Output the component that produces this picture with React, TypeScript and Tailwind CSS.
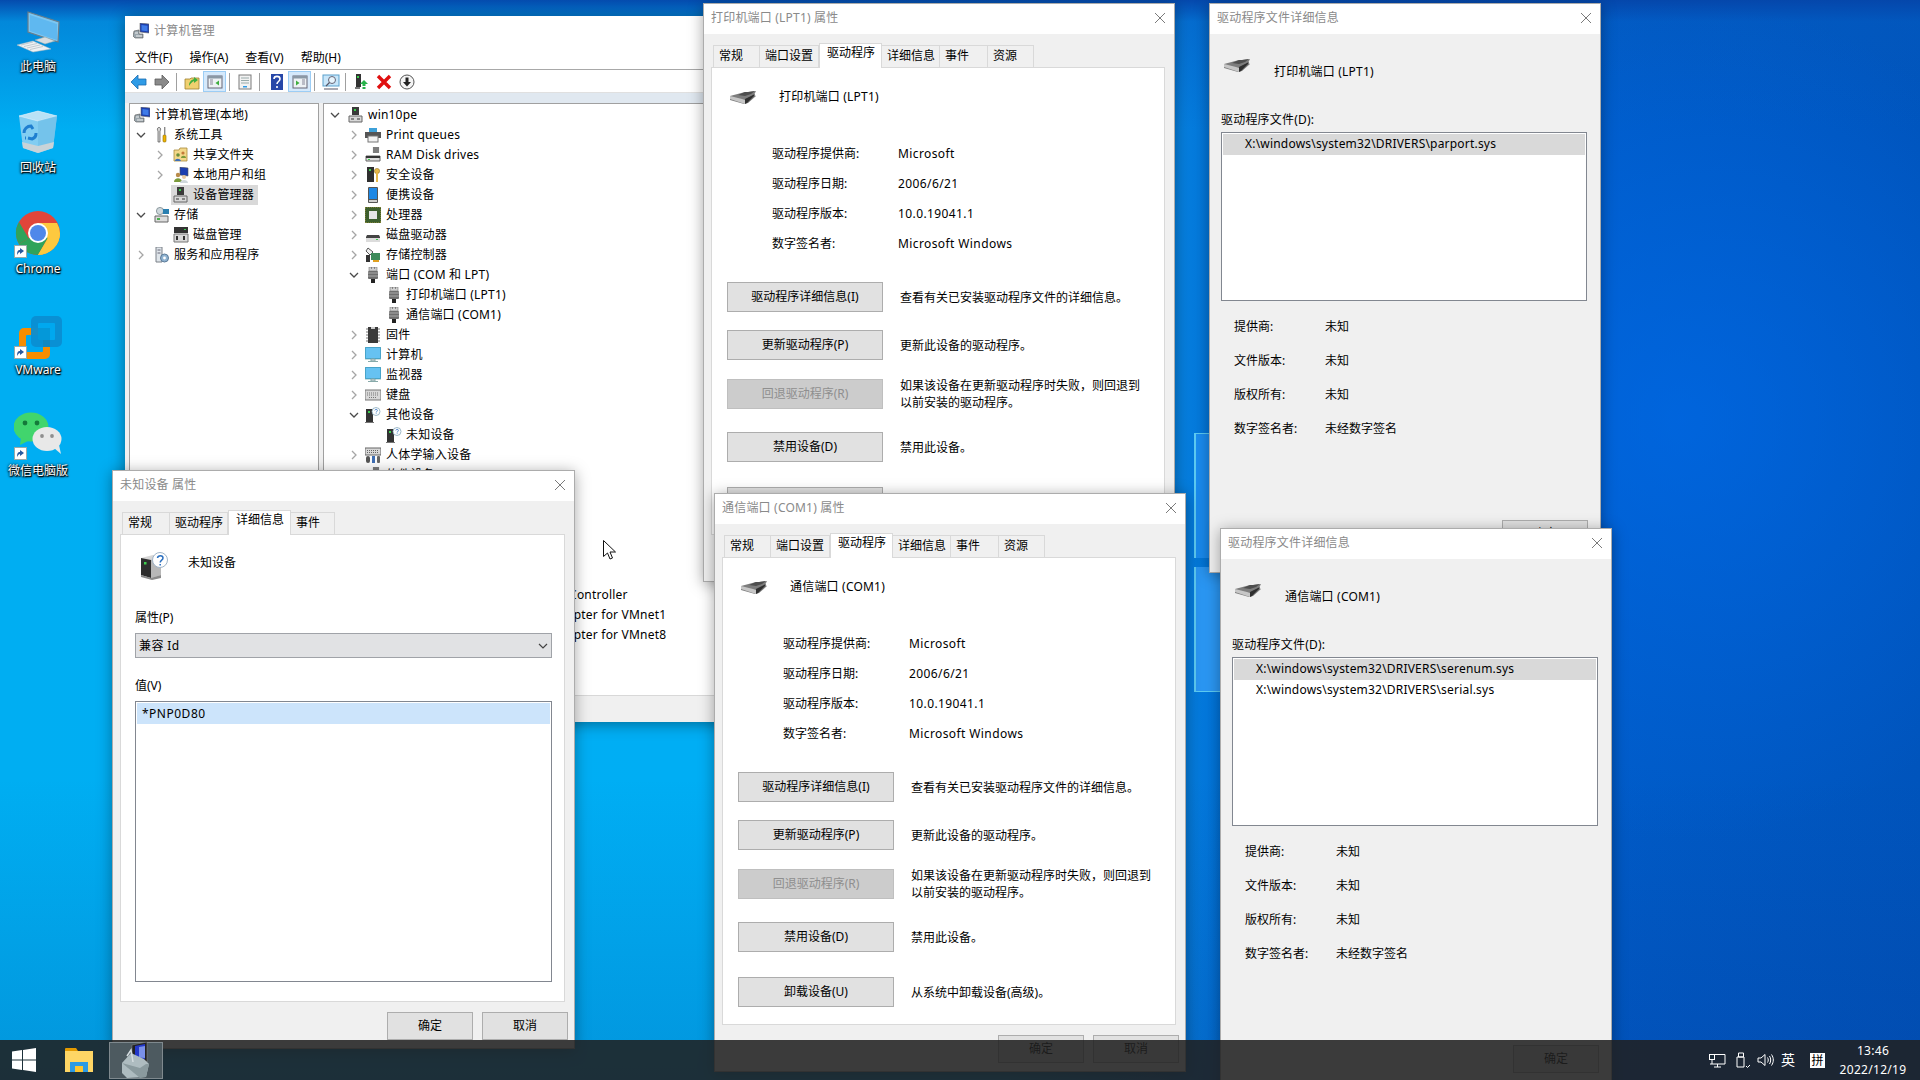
import React from "react";

const FONT = "font-['Noto_Sans','Noto_Sans_CJK_SC',sans-serif]";

function Sv({ s = 16, w, h, vb, children, className = "" }: any) {
  return (
    <svg width={w ?? s} height={h ?? s} viewBox={vb ?? "0 0 16 16"} className={"shrink-0 block " + className}>
      {children}
    </svg>
  );
}

/* ---------- tree icons ---------- */
const Box = () => (
  <>
    <rect x="4" y="0" width="7" height="8" fill="#3a3a3a" />
    <rect x="6" y="2" width="2" height="2" fill="#35d04a" />
    <path d="M1 9h13v6H1z" fill="#d8d8d8" stroke="#666" strokeWidth="1" />
    <path d="M3 12h3M9 12h3" stroke="#333" />
  </>
);
const ComputerMgmt = () => (
  <>
    <path d="M7 0l9 1v9l-9-1z" fill="#1c3fb0" stroke="#666" strokeWidth=".6" />
    <path d="M8.5 2l6 .7v5.6l-6-.7z" fill="#3f7be8" />
    <path d="M1 8l5-1v4h4v4H2L0 13z" fill="#9aa6ad" stroke="#555" strokeWidth=".6" />
    <path d="M2 10h3M3 13h6" stroke="#eee" />
  </>
);
const Tools = () => (
  <>
    <path d="M5 0c-2 1-2 3-1 4v11h2V4c1-1 1-3-1-4z" fill="#d6d6d6" stroke="#555" strokeWidth=".7" />
    <rect x="9" y="8" width="3" height="7" rx="1" fill="#f0b400" stroke="#8a6a00" strokeWidth=".6" />
    <rect x="10" y="0" width="1.4" height="8" fill="#8a8a8a" />
  </>
);
const Share = () => (
  <>
    <path d="M1 3h5l1-2h7v13H1z" fill="#f3d88a" stroke="#a88a3a" strokeWidth=".8" />
    <circle cx="5" cy="8" r="1.8" fill="#6b8e3a" />
    <path d="M2 14c0-3 5-3 6 0z" fill="#3f6fb5" />
    <circle cx="10" cy="6" r="1.6" fill="#c47a3a" />
    <path d="M8 11c0-3 5-3 5 0z" fill="#7a9a3a" />
  </>
);
const Users = () => (
  <>
    <path d="M7 0l8 1v8l-8-1z" fill="#1c3fb0" stroke="#555" strokeWidth=".6" />
    <circle cx="5" cy="8" r="2.2" fill="#b98b4a" />
    <path d="M1 15c0-5 8-5 8 0z" fill="#7a9a3a" />
    <circle cx="11" cy="10" r="2" fill="#e8c9a0" />
    <path d="M7 16c0-4 8-4 8 0z" fill="#cfd8dc" />
  </>
);
const Storage = () => (
  <>
    <circle cx="6" cy="4" r="3.6" fill="#cfd8dc" stroke="#6a7a80" strokeWidth=".7" />
    <rect x="9" y="2" width="6" height="5" fill="#2a7fb0" />
    <path d="M1 9h13v6H1z" fill="#dcdcdc" stroke="#666" />
    <rect x="3" y="11" width="3" height="2" fill="#4caf50" />
  </>
);
const Disk = () => (
  <>
    <rect x="1" y="0" width="14" height="6" fill="#333" />
    <rect x="11" y="2" width="2" height="1" fill="#3ccf4e" />
    <path d="M1 7h14v8H1z" fill="#dadada" stroke="#777" />
    <path d="M4 9v4M11 9v4" stroke="#333" strokeWidth="2" />
  </>
);
const Services = () => (
  <>
    <path d="M2 0h6v15H2z" fill="#dfe5ea" stroke="#7a8088" />
    <path d="M3.5 3h3M3.5 6h3" stroke="#667" />
    <circle cx="10.5" cy="11" r="4" fill="#8fb2d0" stroke="#5a7a98" />
    <circle cx="10.5" cy="11" r="1.4" fill="#fff" />
  </>
);
const Queue = () => (
  <>
    <rect x="4" y="1" width="8" height="4" fill="#3da0d8" />
    <rect x="0" y="5" width="16" height="6" fill="#555" />
    <rect x="3" y="9" width="10" height="6" fill="#f2f2f2" stroke="#777" />
  </>
);
const Ram = () => (
  <>
    <rect x="8" y="0" width="6" height="6" fill="#555" />
    <path d="M7 1h8M7 3h8M7 5h8" stroke="#ddd" strokeWidth=".6" />
    <path d="M1 9h14v5H1z" fill="#dcdcdc" stroke="#666" />
    <rect x="1" y="9" width="14" height="2" fill="#333" />
    <rect x="3" y="12" width="2" height="1" fill="#3ccf4e" />
  </>
);
const Security = () => (
  <>
    <rect x="2" y="0" width="7" height="15" fill="#2f2f2f" />
    <rect x="4" y="2" width="2" height="2" fill="#3ccf4e" />
    <circle cx="12" cy="4" r="2.6" fill="#e6b94a" stroke="#99782a" strokeWidth=".6" />
    <rect x="11" y="6" width="2" height="9" fill="#e6b94a" />
  </>
);
const Portable = () => (
  <>
    <rect x="3" y="0" width="10" height="16" rx="1" fill="#555" />
    <rect x="4" y="1" width="8" height="11" fill="#1e88e5" />
    <rect x="4" y="13" width="8" height="2" fill="#cfcfcf" />
  </>
);
const Cpu = () => (
  <>
    <rect x="0" y="0" width="16" height="16" fill="#3d5f2e" />
    <path d="M0 0h16v16H0z" fill="none" stroke="#b59a3a" strokeDasharray="1 1" />
    <rect x="4" y="4" width="8" height="8" fill="#e6e6e6" />
  </>
);
const DiskDrive = () => (
  <>
    <path d="M2 8h12l1 2v5H1v-5z" fill="#444" />
    <path d="M1 11h14v4H1z" fill="#dcdcdc" />
    <rect x="11" y="12" width="2" height="1" fill="#3ccf4e" />
  </>
);
const StorageCtl = () => (
  <>
    <path d="M3 1l5 4-3 3-4-4z" fill="#eee" stroke="#555" />
    <rect x="1" y="8" width="4" height="7" fill="#333" />
    <rect x="6" y="6" width="9" height="7" fill="#3d8a5a" />
    <rect x="8" y="13" width="6" height="2" fill="#e0a020" />
  </>
);
const Port = () => (
  <>
    <rect x="4" y="0" width="8" height="4" fill="#cfcfcf" stroke="#777" strokeWidth=".6" />
    <path d="M6 1h1M9 1h1" stroke="#444" />
    <rect x="3" y="4" width="10" height="8" rx="1" fill="#6e6e6e" />
    <path d="M3 6h10M3 9h10" stroke="#aaa" />
    <rect x="6" y="12" width="4" height="4" fill="#222" />
  </>
);
const Firmware = () => (
  <>
    <rect x="3" y="0" width="10" height="16" fill="#3a3a3a" />
    <path d="M1 2h2M1 5h2M1 8h2M1 11h2M1 14h2M13 2h2M13 5h2M13 8h2M13 11h2M13 14h2" stroke="#777" />
    <path d="M6 0h4v2H6z" fill="#ccc" />
  </>
);
const Computer = () => (
  <>
    <rect x="0" y="0" width="16" height="12" fill="#2aa0e0" stroke="#7aa" strokeWidth=".8" />
    <rect x="1" y="1" width="14" height="10" fill="#66c2f2" />
    <path d="M6 12h4v2H6zM3 14.5h10" stroke="#8aa" fill="#cfd8dc" />
  </>
);
const Keyboard = () => (
  <>
    <rect x="0" y="3" width="16" height="10" fill="#d8d8d8" stroke="#777" />
    <path d="M2 6h12M2 8h12M4 10.5h8" stroke="#777" strokeDasharray="1 1" />
  </>
);
const Unknown = () => (
  <>
    <rect x="1" y="2" width="7" height="13" fill="#333" />
    <rect x="3" y="4" width="2" height="2" fill="#3ccf4e" />
    <path d="M0 15h9v1H0z" fill="#777" />
    <circle cx="11" cy="4.5" r="4" fill="#fff" stroke="#8ab" strokeWidth=".8" />
    <path d="M9.8 3.4c.3-1.4 2.6-1.4 2.6 0 0 1-1.2 1-1.2 2.1M11.2 6.4v.6" stroke="#2a6fc0" fill="none" strokeWidth=".8" />
  </>
);
const Hid = () => (
  <>
    <rect x="0" y="1" width="16" height="7" fill="#d8d8d8" stroke="#666" />
    <path d="M2 3.5h12M2 5.5h12" stroke="#666" strokeDasharray="1 1" />
    <rect x="1" y="9" width="4" height="7" rx="2" fill="#555" />
    <rect x="7" y="9" width="3" height="7" fill="#3f6fb5" />
    <rect x="12" y="9" width="3" height="7" rx="1" fill="#666" />
  </>
);
const Sound = () => (
  <>
    <path d="M2 6h3l5-4v12l-5-4H2z" fill="#c9c9c9" stroke="#666" />
    <path d="M12 5c1.4 2 1.4 4 0 6" stroke="#666" fill="none" />
  </>
);
const Net = () => (
  <>
    <rect x="1" y="1" width="14" height="9" fill="#5bb5ee" stroke="#667" />
    <path d="M8 10v3M2 14h12" stroke="#444" strokeWidth="1.4" />
  </>
);

const ICONS: any = {
  cm: ComputerMgmt, tools: Tools, share: Share, users: Users, box: Box, storage: Storage, disk: Disk, services: Services,
  queue: Queue, ram: Ram, sec: Security, portable: Portable, cpu: Cpu, drive: DiskDrive, ctl: StorageCtl, port: Port,
  fw: Firmware, pc: Computer, kb: Keyboard, unk: Unknown, hid: Hid, sound: Sound, net: Net,
};

function TreeIcon({ n }: { n: string }) {
  const C = ICONS[n];
  return (
    <Sv>
      <C />
    </Sv>
  );
}

function Chevron({ open }: { open?: boolean }) {
  return open ? (
    <Sv s={16}>
      <path d="M4 6l4 4 4-4" fill="none" stroke="#4a4a4a" strokeWidth="1.3" />
    </Sv>
  ) : (
    <Sv s={16}>
      <path d="M6 4l4 4-4 4" fill="none" stroke="#a6a6a6" strokeWidth="1.3" />
    </Sv>
  );
}

type Node = { lv: number; ic: string; t: string; c?: "o" | "c"; sel?: boolean; tight?: boolean };

const LV = ["pl-[3px]", "pl-[22px]", "pl-[41px]"];

function Row({ lv, ic, t, c, sel, tight }: Node) {
  return (
    <div className={"flex items-center h-[20px] whitespace-nowrap " + LV[lv]}>
      <div className="w-[16px] h-[16px]">{c && <Chevron open={c === "o"} />}</div>
      <div className={"flex items-center h-[20px] pl-[2px] pr-[4px] " + (tight ? "ml-[1px] " : "ml-[3px] ") + (sel ? "bg-[#d9d9d9]" : "")}>
        <TreeIcon n={ic} />
        <span className={"tracking-[0.2px] " + (tight ? "ml-[5px]" : "ml-[4px]")}>{t}</span>
      </div>
    </div>
  );
}

const LEFT: Node[] = [
  { lv: 0, ic: "tools", t: "系统工具", c: "o" },
  { lv: 1, ic: "share", t: "共享文件夹", c: "c" },
  { lv: 1, ic: "users", t: "本地用户和组", c: "c" },
  { lv: 1, ic: "box", t: "设备管理器", sel: true },
  { lv: 0, ic: "storage", t: "存储", c: "o" },
  { lv: 1, ic: "disk", t: "磁盘管理" },
  { lv: 0, ic: "services", t: "服务和应用程序", c: "c" },
];

const RIGHT: Node[] = [
  { lv: 0, ic: "box", t: "win10pe", c: "o" },
  { lv: 1, ic: "queue", t: "Print queues", c: "c", tight: true },
  { lv: 1, ic: "ram", t: "RAM Disk drives", c: "c", tight: true },
  { lv: 1, ic: "sec", t: "安全设备", c: "c", tight: true },
  { lv: 1, ic: "portable", t: "便携设备", c: "c", tight: true },
  { lv: 1, ic: "cpu", t: "处理器", c: "c", tight: true },
  { lv: 1, ic: "drive", t: "磁盘驱动器", c: "c", tight: true },
  { lv: 1, ic: "ctl", t: "存储控制器", c: "c", tight: true },
  { lv: 1, ic: "port", t: "端口 (COM 和 LPT)", c: "o", tight: true },
  { lv: 2, ic: "port", t: "打印机端口 (LPT1)" },
  { lv: 2, ic: "port", t: "通信端口 (COM1)" },
  { lv: 1, ic: "fw", t: "固件", c: "c", tight: true },
  { lv: 1, ic: "pc", t: "计算机", c: "c", tight: true },
  { lv: 1, ic: "pc", t: "监视器", c: "c", tight: true },
  { lv: 1, ic: "kb", t: "键盘", c: "c", tight: true },
  { lv: 1, ic: "unk", t: "其他设备", c: "o", tight: true },
  { lv: 2, ic: "unk", t: "未知设备" },
  { lv: 1, ic: "hid", t: "人体学输入设备", c: "c", tight: true },
  { lv: 1, ic: "ram", t: "软件设备", c: "c", tight: true },
  { lv: 1, ic: "ram", t: "软件组件", c: "c", tight: true },
  { lv: 1, ic: "sound", t: "声音、视频和游戏控制器", c: "c", tight: true },
  { lv: 1, ic: "hid", t: "鼠标和其他指针设备", c: "c", tight: true },
  { lv: 1, ic: "port", t: "通用串行总线控制器", c: "c", tight: true },
  { lv: 1, ic: "net", t: "网络适配器", c: "o", tight: true },
  { lv: 2, ic: "net", t: "Realtek Gaming GbE Family Controller" },
  { lv: 2, ic: "net", t: "VMware Virtual Ethernet Adapter for VMnet1" },
  { lv: 2, ic: "net", t: "VMware Virtual Ethernet Adapter for VMnet8" },
];

/* ---------- toolbar ---------- */
function ToolBtn({ on, children }: any) {
  return (
    <div className={"flex items-center justify-center h-[21px] w-[23px] shrink-0 " + (on ? "bg-[#d5e9fb] border border-[#9ccdf5]" : "")}>
      {children}
    </div>
  );
}
const Sep = () => <div className="w-[1px] h-[18px] bg-[#a0a0a0] mx-[3px] shrink-0" />;

function Toolbar() {
  return (
    <div className="flex items-center h-[22px] bg-white pl-[2px] pt-[1px]">
      <ToolBtn>
        <Sv w={17} h={16} vb="0 0 17 16">
          <path d="M8 1L1 8l7 7v-4h8V5H8z" fill="#2f9be6" stroke="#1a6cb0" strokeWidth=".8" />
        </Sv>
      </ToolBtn>
      <ToolBtn>
        <Sv w={16} h={16}>
          <path d="M8 1l7 7-7 7v-4H1V5h7z" fill="#8a8a8a" stroke="#5c5c5c" strokeWidth=".8" />
        </Sv>
      </ToolBtn>
      <Sep />
      <ToolBtn>
        <Sv>
          <path d="M1 5h5l1-1h8v11H1z" fill="#f0d070" stroke="#a08030" strokeWidth=".8" />
          <path d="M5 12c0-4 2-6 5-7V3l4 3-4 3V7c-2 1-3 2-5 5z" fill="#3fae3f" />
        </Sv>
      </ToolBtn>
      <ToolBtn on>
        <Sv>
          <rect x="1" y="2" width="14" height="12" fill="#eef2f5" stroke="#667" />
          <rect x="1" y="2" width="14" height="2.5" fill="#8a98a5" />
          <path d="M3 6h3M3 8h3M3 10h3" stroke="#889" />
          <path d="M12 6.5v5L8.5 9z" fill="#3fae3f" />
        </Sv>
      </ToolBtn>
      <Sep />
      <ToolBtn>
        <Sv>
          <rect x="2" y="1" width="12" height="14" fill="#f2f2f2" stroke="#7a7a7a" />
          <path d="M4 4h8M4 6.5h8M4 9h8" stroke="#9aa" />
          <rect x="6" y="12" width="4" height="1.5" fill="#2f9be6" />
        </Sv>
      </ToolBtn>
      <Sep />
      <div className="w-[2px] shrink-0" />
      <ToolBtn>
        <Sv w={14} h={16} vb="0 0 14 16">
          <rect x="1" y="0" width="12" height="16" fill="#2747a8" />
          <path d="M4 5c0-3.5 6-3.5 6 0 0 2.5-3 2.5-3 5M7 12v2" stroke="#fff" fill="none" strokeWidth="1.6" />
        </Sv>
      </ToolBtn>
      <ToolBtn on>
        <Sv>
          <rect x="1" y="2" width="14" height="12" fill="#eef2f5" stroke="#667" />
          <rect x="1" y="2" width="14" height="2.5" fill="#8a98a5" />
          <path d="M10 6h3M10 8h3M10 10h3" stroke="#889" />
          <path d="M4 6.5v5L7.5 9z" fill="#3fae3f" />
        </Sv>
      </ToolBtn>
      <Sep />
      <div className="w-[1px] shrink-0" />
      <ToolBtn>
        <Sv w={18} h={16} vb="0 0 18 16">
          <rect x="1" y="1" width="16" height="11" fill="#c8e6fa" stroke="#5aa0cc" />
          <circle cx="10" cy="6" r="3.5" fill="#e8f5fd" stroke="#667" />
          <path d="M7.5 8.5L4 12M2 15h14" stroke="#556" strokeWidth="1.2" />
        </Sv>
      </ToolBtn>
      <Sep />
      <ToolBtn>
        <Sv>
          <rect x="3" y="0" width="5" height="13" fill="#333" />
          <rect x="4" y="2" width="2" height="2" fill="#3ccf4e" />
          <path d="M2 13h5v2H2z" fill="#777" />
          <path d="M11 6l4 4h-2.5v2h-3v-2H7z" fill="#27b34a" />
          <rect x="9.500" y="13" width="3" height="2" fill="#27b34a" />
        </Sv>
      </ToolBtn>
      <ToolBtn>
        <Sv>
          <path d="M2 2l12 12M14 2L2 14" stroke="#e01010" strokeWidth="3.400" />
        </Sv>
      </ToolBtn>
      <ToolBtn>
        <Sv>
          <circle cx="8" cy="8" r="7" fill="#f4f4f4" stroke="#555" />
          <path d="M6.500 3.500h3V8h2.500L8 12.500 4 8h2.500z" fill="#222" />
        </Sv>
      </ToolBtn>
    </div>
  );
}

/* ---------- small dialog parts ---------- */
function CloseX() {
  return (
    <Sv s={12} vb="0 0 12 12">
      <path d="M1 1l10 10M11 1L1 11" stroke="#7a7a7a" strokeWidth="1" />
    </Sv>
  );
}

function TitleBar({ t }: { t: string }) {
  return (
    <div className="flex items-center justify-between h-[30px] bg-white pl-[7px] pr-[8px] pb-[2px] text-[#8a8a8a] tracking-[0.2px] shrink-0">
      <span>{t}</span>
      <CloseX />
    </div>
  );
}

function Tabs({ items, activeIndex }: { items: [string, string][]; activeIndex: number }) {
  return (
    <div className="flex items-end h-[24px] mt-[9px] ml-[9px] shrink-0 relative z-10">
      {items.map(([t, w], i) =>
        i === activeIndex ? (
          <div key={t} className={"h-[25px] -mb-[1px] bg-white border border-b-0 border-[#d9d9d9] pl-[7px] pb-[2px] " + w}>
            {t}
          </div>
        ) : (
          <div key={t} className={"h-[22px] bg-[#f0f0f0] border border-l-0 first:border-l border-b-0 border-[#d9d9d9] pl-[5px] pt-[1px] " + w}>
            {t}
          </div>
        )
      )}
    </div>
  );
}

function Btn({ t, className = "", disabled }: { t: string; className?: string; disabled?: boolean }) {
  return (
    <div
      className={
        "flex items-center justify-center border shrink-0 " +
        (disabled ? "bg-[#cccccc] border-[#bfbfbf] text-[#8f8f8f] " : "bg-[#e1e1e1] border-[#adadad] text-black ") +
        className
      }
    >
      {t}
    </div>
  );
}

function PortIcon() {
  return (
    <Sv w={28} h={16} vb="0 0 28 16">
      <path d="M1 7l15-4h3l8-1-2 4 2 1-8 7-4 1L1 11z" fill="#7d7d7d" />
      <path d="M1 7l12 3 3 1v4L1 10z" fill="#c6c6c6" />
      <path d="M16 10l10-5-1 2-7 7-2 1z" fill="#2f2f2f" />
      <path d="M16 3h3l7-1-4 3-6 2-7-1z" fill="#4e4e4e" />
    </Sv>
  );
}

const DriverRows: [string, string][] = [
  ["驱动程序提供商:", "Microsoft"],
  ["驱动程序日期:", "2006/6/21"],
  ["驱动程序版本:", "10.0.19041.1"],
  ["数字签名者:", "Microsoft Windows"],
];

const PORT_TABS: [string, string][] = [
  ["常规", "w-[47px]"],
  ["端口设置", "w-[59px]"],
  ["驱动程序", "w-[63px]"],
  ["详细信息", "w-[58px]"],
  ["事件", "w-[48px]"],
  ["资源", "w-[46px]"],
];

function ActRow({ btn, disabled, desc, className }: { btn: string; disabled?: boolean; desc: React.ReactNode; className: string }) {
  return (
    <div className={"flex items-center pl-[15px] " + className}>
      <Btn t={btn} disabled={disabled} className="w-[156px] h-[30px]" />
      <div className="ml-[17px] leading-[17px]">{desc}</div>
    </div>
  );
}

function PortDialog({ name, className }: { name: string; className: string }) {
  return (
    <div className={"absolute flex flex-col bg-[#f0f0f0] border border-[#7f7f7f]/60 shadow-[0_2px_14px_rgba(0,0,0,0.35)] w-[472px] h-[579px] " + className}>
      <TitleBar t={name + " 属性"} />
      <Tabs items={PORT_TABS} activeIndex={2} />
      <div className="flex flex-col w-[454px] h-[468px] ml-[7px] bg-white border border-[#d9d9d9]">
        <div className="flex items-start pl-[17px] pt-[21px] h-[71px]">
          <PortIcon />
          <span className="ml-[22px] -mt-[1px] tracking-[0.2px]">{name}</span>
        </div>
        <div className="flex flex-col">
          {DriverRows.map(([a, b]) => (
            <div key={a} className="flex items-center h-[30px] pl-[60px]">
              <span className="w-[126px]">{a}</span>
              <span className="tracking-[0.4px]">{b}</span>
            </div>
          ))}
        </div>
        <ActRow className="mt-[23px]" btn="驱动程序详细信息(I)" desc="查看有关已安装驱动程序文件的详细信息。" />
        <ActRow className="mt-[18px]" btn="更新驱动程序(P)" desc="更新此设备的驱动程序。" />
        <ActRow
          className="mt-[17px]"
          btn="回退驱动程序(R)"
          disabled
          desc={
            <>
              如果该设备在更新驱动程序时失败，则回退到
              <br />
              以前安装的驱动程序。
            </>
          }
        />
        <ActRow className="mt-[21px]" btn="禁用设备(D)" desc="禁用此设备。" />
        <ActRow className="mt-[25px]" btn="卸载设备(U)" desc="从系统中卸载设备(高级)。" />
      </div>
      <div className="flex justify-end gap-[9px] mt-[10px] pr-[6px]">
        <Btn t="确定" className="w-[86px] h-[28px]" />
        <Btn t="取消" className="w-[86px] h-[28px]" />
      </div>
    </div>
  );
}

const FileInfo: [string, string][] = [
  ["提供商:", "未知"],
  ["文件版本:", "未知"],
  ["版权所有:", "未知"],
  ["数字签名者:", "未经数字签名"],
];

function FileDialog({ name, files, className }: { name: string; files: string[]; className: string }) {
  return (
    <div className={"absolute flex flex-col bg-[#f0f0f0] border border-[#7f7f7f]/60 shadow-[0_2px_14px_rgba(0,0,0,0.35)] w-[392px] h-[570px] " + className}>
      <TitleBar t="驱动程序文件详细信息" />
      <div className="flex items-start h-[47px] pl-[13px] pt-[23px]">
        <PortIcon />
        <span className="ml-[23px] mt-[6px] tracking-[0.2px]">{name}</span>
      </div>
      <div className="pl-[11px] mt-[28px] h-[21px] leading-[21px] tracking-[0.2px]">驱动程序文件(D):</div>
      <div className="ml-[11px] mt-[2px] w-[366px] h-[169px] bg-white border border-[#828790] p-[1px]">
        {files.map((f, i) => (
          <div key={f} className={"h-[21px] leading-[20px] pl-[22px] tracking-[0.2px] " + (i === 0 ? "bg-[#d9d9d9]" : "")}>
            {f}
          </div>
        ))}
      </div>
      <div className="flex flex-col mt-[9px]">
        {FileInfo.map(([a, b]) => (
          <div key={a} className="flex items-center h-[34px] pl-[24px]">
            <span className="w-[91px]">{a}</span>
            <span>{b}</span>
          </div>
        ))}
      </div>
      <div className="flex justify-end pr-[12px] mt-[74px]">
        <Btn t="确定" className="w-[86px] h-[28px]" />
      </div>
    </div>
  );
}

function UnknownDevIcon() {
  return (
    <Sv s={28} vb="0 0 28 28">
      <path d="M1 6l12-3 8 2v18l-9 4-11-3z" fill="#d6d6d6" />
      <path d="M1 6l10 2v18L1 23z" fill="#2e2e2e" />
      <path d="M11 8l10-3v18l-10 3z" fill="#b8b8b8" />
      <rect x="4" y="10" width="2.500" height="2.500" fill="#3ccf4e" />
      <path d="M1 23l10 3 10-3v3l-9 2-11-3z" fill="#8a8a8a" />
      <circle cx="20" cy="8" r="7.500" fill="#fff" stroke="#9fb4c8" />
      <path d="M17.500 6c.5-3 5.500-3 5.500 0 0 2.200-2.800 2-2.800 4.500M20.200 12v1.500" stroke="#2a6fc0" fill="none" strokeWidth="1.500" />
    </Sv>
  );
}

function UnknownDialog() {
  const tabs: [string, string][] = [
    ["常规", "w-[48px]"],
    ["驱动程序", "w-[58px]"],
    ["详细信息", "w-[63px]"],
    ["事件", "w-[44px]"],
  ];
  return (
    <div className="absolute left-[112px] top-[470px] w-[463px] h-[579px] flex flex-col bg-[#f0f0f0] border border-[#7f7f7f]/60 shadow-[0_2px_14px_rgba(0,0,0,0.35)]">
      <TitleBar t="未知设备 属性" />
      <Tabs items={tabs} activeIndex={2} />
      <div className="flex flex-col w-[445px] h-[468px] ml-[7px] bg-white border border-[#d9d9d9] pl-[14px]">
        <div className="flex items-start h-[66px] pt-[17px] pl-[5px]">
          <UnknownDevIcon />
          <span className="ml-[20px] mt-[2px]">未知设备</span>
        </div>
        <div className="h-[20px] leading-[20px] mt-[7px]">属性(P)</div>
        <div className="mt-[5px] flex items-center justify-between w-[417px] h-[25px] bg-[#e1e2e4] border border-[#a0a3a8] pl-[3px] pr-[2px]">
          <span className="tracking-[0.4px]">兼容 Id</span>
          <Sv s={12} vb="0 0 12 12">
            <path d="M2 4l4 4 4-4" fill="none" stroke="#444" strokeWidth="1.200" />
          </Sv>
        </div>
        <div className="h-[20px] leading-[20px] mt-[18px]">值(V)</div>
        <div className="mt-[5px] w-[417px] h-[281px] border border-[#828790] p-[1px]">
          <div className="h-[21px] leading-[21px] pl-[5px] bg-[#cce4fb] tracking-[0.5px]">*PNP0D80</div>
        </div>
      </div>
      <div className="flex justify-end gap-[9px] mt-[10px] pr-[6px]">
        <Btn t="确定" className="w-[86px] h-[28px]" />
        <Btn t="取消" className="w-[86px] h-[28px]" />
      </div>
    </div>
  );
}

function MainWindow() {
  return (
    <div className="absolute left-[125px] top-[16px] w-[640px] h-[706px] flex flex-col bg-[#f0f0f0] shadow-[0_2px_14px_rgba(0,0,0,0.4)]">
      <div className="flex items-center h-[30px] bg-white pl-[8px] text-[#8a8a8a] tracking-[0.2px] shrink-0">
        <TreeIcon n="cm" />
        <span className="ml-[5px]">计算机管理</span>
      </div>
      <div className="flex items-center gap-[17px] h-[23px] bg-white pl-[10px] shrink-0">
        <span>文件(F)</span>
        <span>操作(A)</span>
        <span>查看(V)</span>
        <span>帮助(H)</span>
      </div>
      <div className="h-[1px] bg-[#a8a8a8] shrink-0" />
      <Toolbar />
      <div className="h-[1px] bg-[#e0e0e0] shrink-0" />
      <div className="h-[10px] bg-[#e0e8f0] shrink-0" />
      <div className="flex flex-1 pl-[4px] gap-[4px] min-h-0">
        <div className="w-[190px] bg-white border-t border-l border-r border-[#a0a0a0] pt-[1px] overflow-hidden">
          <div className="flex items-center h-[20px] pl-[4px]">
            <TreeIcon n="cm" />
            <span className="ml-[5px] tracking-[0.2px]">计算机管理(本地)</span>
          </div>
          {LEFT.map((n) => (
            <Row key={n.t} {...n} />
          ))}
        </div>
        <div className="flex-1 bg-white border-t border-l border-[#a0a0a0] pt-[1px] overflow-hidden">
          {RIGHT.map((n) => (
            <Row key={n.t} {...n} />
          ))}
        </div>
      </div>
      <div className="h-[27px] border-t border-[#d8d8d8] shrink-0" />
    </div>
  );
}

/* ---------- desktop ---------- */
function Shortcut() {
  return (
    <div className="absolute left-0 bottom-0 w-[13px] h-[13px] bg-white border border-[#9aa] flex items-center justify-center">
      <svg width="9" height="9" viewBox="0 0 9 9">
        <path d="M1 8c0-4 1-5 3-5V1l4 3-4 3V5C3 5 2 6 1 8z" fill="#2a5a9e" />
      </svg>
    </div>
  );
}

function DeskIcon({ label, children, sc }: any) {
  return (
    <div className="flex flex-col items-center h-[101px] pt-[2px]">
      <div className="relative w-[48px] h-[48px]">
        {children}
        {sc && <Shortcut />}
      </div>
      <div className="h-[20px] mt-[1px] leading-[20px] text-white text-[12px] whitespace-nowrap [text-shadow:0_1px_2px_#000,0_0_3px_#000,1px_1px_1px_#000]">
        {label}
      </div>
    </div>
  );
}

function Desktop() {
  return (
    <div className="absolute left-0 top-[6px] w-[76px] flex flex-col">
      <DeskIcon label="此电脑">
        <svg width="48" height="48" viewBox="0 0 48 48">
          <path d="M14 4l31 10-1 20L14 24z" fill="#7cc7f2" stroke="#6a7f8c" strokeWidth="1.200" />
          <path d="M16 7l27 9v16L16 23z" fill="#5fb8f0" />
          <path d="M21 32l10-3 10 4-10 3z" fill="#d8dde0" stroke="#9aa" strokeWidth=".5" />
          <path d="M3 37l16-4 18 8-18 3z" fill="#eef1f3" stroke="#b0b8bc" strokeWidth=".5" />
          <path d="M7 37l12-3M10 38.500l13-3M13 40l13-3M16 41.500l13-3" stroke="#b8c0c6" strokeWidth=".8" />
        </svg>
      </DeskIcon>
      <DeskIcon label="回收站">
        <svg width="48" height="48" viewBox="0 0 48 48">
          <path d="M5 7l19-5 19 5-4 32-15 5-15-5z" fill="#8fd0f2" fillOpacity=".9" />
          <path d="M5 7l19-5 19 5-19 5z" fill="#b9e2f6" stroke="#dff2fb" strokeWidth=".6" />
          <path d="M24 12l19-5-4 32-15 5z" fill="#6fbfe8" fillOpacity=".7" />
          <path d="M8 33l16 4 16-4-1 6-15 5-15-5z" fill="#c9d3d8" />
          <path d="M10 24a7 7 0 0 1 7-7l2 3M22 24a6 6 0 0 1-4 6l-4-1M12 29l-1 0" fill="none" stroke="#1f7fd0" strokeWidth="3" />
        </svg>
      </DeskIcon>
      <DeskIcon label="Chrome" sc>
        <svg width="48" height="48" viewBox="0 0 48 48">
          <circle cx="24" cy="23" r="22" fill="#e0453a" />
          <path d="M24 23L5 34A22 22 0 0 1 5 12l10 17z" fill="#2fa35a" />
          <path d="M24 23L5 34A22 22 0 0 0 24 45l11-19z" fill="#2fa35a" />
          <path d="M24 23h22A22 22 0 0 1 24 45l11-19z" fill="#fdc93f" />
          <path d="M24 13h19a22 22 0 0 1 3 10 22 22 0 0 1-22 22l10-16z" fill="#fdc93f" />
          <circle cx="24" cy="23" r="10" fill="#fff" />
          <circle cx="24" cy="23" r="8" fill="#4f88ea" />
        </svg>
      </DeskIcon>
      <DeskIcon label="VMware" sc>
        <svg width="48" height="48" viewBox="0 0 48 48">
          <rect x="5" y="17" width="31" height="31" rx="5" fill="#f78d00" />
          <rect x="12" y="24" width="17" height="17" rx="1" fill="#00a8ef" />
          <rect x="17" y="5" width="31" height="31" rx="5" fill="#0a8ed2" fillOpacity=".95" />
          <rect x="24" y="12" width="17" height="17" rx="1" fill="#00a8ef" />
          <path d="M17 17h19v19H29v-7H24V17z" fill="#0a7fb8" fillOpacity=".4" />
        </svg>
      </DeskIcon>
      <DeskIcon label="微信电脑版" sc>
        <svg width="48" height="48" viewBox="0 0 48 48">
          <ellipse cx="17" cy="15" rx="17.500" ry="14.500" fill="#41d56d" />
          <path d="M7 25l-1 8 8-4z" fill="#41d56d" />
          <circle cx="11" cy="11" r="2.400" fill="#147a3a" />
          <circle cx="23" cy="11" r="2.400" fill="#147a3a" />
          <ellipse cx="33" cy="27" rx="14.500" ry="12" fill="#e8e8e8" />
          <path d="M40 36l7 6-2-9z" fill="#e8e8e8" />
          <circle cx="28" cy="24" r="1.900" fill="#8f8f8f" />
          <circle cx="38" cy="24" r="1.900" fill="#8f8f8f" />
        </svg>
      </DeskIcon>
    </div>
  );
}

function Taskbar() {
  return (
    <div className="absolute left-0 right-0 bottom-0 h-[40px] bg-[#202020]/[.87] flex items-center">
      <div className="w-[48px] flex justify-center">
        <svg width="24" height="24" viewBox="0 0 24 24">
          <path d="M0 3.500L10 2v9.500H0zM11 2l13-2v11.500H11zM0 12.500h10V22L0 20.500zM11 12.500h13V24l-13-2z" fill="#fff" />
        </svg>
      </div>
      <div className="w-[61px] flex justify-center">
        <svg width="28" height="26" viewBox="0 0 28 26">
          <path d="M0 2a1 1 0 0 1 1-1h10l2 3H0z" fill="#e49a00" />
          <rect x="0" y="4" width="28" height="21" fill="#fed665" />
          <path d="M5 25v-10h18v10h-5v-5h-8v5z" fill="#2b9ae4" />
          <rect x="10" y="19" width="8" height="6" fill="#fdc52f" />
        </svg>
      </div>
      <div className="w-[54px] h-[37px] flex items-center justify-center bg-[#4d5a60] border border-[#7f898e]">
        <svg width="30" height="36" viewBox="0 0 30 36">
          <path d="M11 3l15-3v20l-15-2z" fill="#222" stroke="#888" strokeWidth=".5" />
          <path d="M14 4l10-2v15l-10-1z" fill="#2438c8" />
          <path d="M18 5l6-1v12l-6-.5z" fill="#7a90e8" />
          <path d="M1 21l9-10 13 6 5 5-3 13-19 1-5-5z" fill="#aebcc0" />
          <path d="M1 21l18 5 6-4 3 0-3 13-6 1z" fill="#8a9a9e" />
          <path d="M6 14l4-6 2 12" fill="none" stroke="#d5dde0" strokeWidth="1.500" />
        </svg>
      </div>
      <div className="flex-1" />
      <div className="flex items-center h-[40px]">
        <svg width="17" height="15" viewBox="0 0 17 15" className="mr-[10px]">
          <path d="M5 1.500h11V11H1M8.500 11v3M5 14h7" fill="none" stroke="#fff" />
          <rect x="0.500" y="1.500" width="5" height="5" fill="#1b2b38" stroke="#fff" />
          <path d="M3 6.500V11" stroke="#fff" />
        </svg>
        <svg width="14" height="16" viewBox="0 0 14 16" className="mr-[7px]">
          <path d="M1 5v10h7V5zM2.500 1h5v4h-5z" fill="none" stroke="#fff" />
          <path d="M10 14l1.500 1.500L14 13" fill="none" stroke="#fff" />
        </svg>
        <svg width="17" height="14" viewBox="0 0 17 14" className="mr-[7px]">
          <path d="M1 5h3l4-3.500v11L4 9H1z" fill="none" stroke="#fff" />
          <path d="M10.500 4.500c1 1.500 1 3.500 0 5M12.500 3c1.600 2.500 1.600 5.500 0 8M14.500 1.500c2.400 3.500 2.400 7.500 0 11" fill="none" stroke="#fff" />
        </svg>
        <div className="w-[15px] text-white text-[14px] leading-[16px]">英</div>
        <div className="ml-[14px] w-[15px] h-[15px] bg-white text-black text-[12px] leading-[15px] text-center">拼</div>
        <div className="ml-[1px] w-[94px] flex flex-col items-center text-white text-[12px] leading-[19px] tracking-[0.3px]">
          <span>13:46</span>
          <span>2022/12/19</span>
        </div>
      </div>
    </div>
  );
}

export default function App() {
  return (
    <div className={"relative w-[1920px] h-[1080px] overflow-hidden text-[12px] text-black " + FONT}>
      {/* wallpaper */}
      <div className="absolute inset-0 bg-[linear-gradient(90deg,#00aef2_0%,#00aef5_52%,#0a88e2_60%,#0070d8_64%,#0060d0_72%,#0054bc_100%)]" />
      <div className="absolute inset-0 bg-[linear-gradient(180deg,rgba(5,70,170,0.95)_0%,rgba(5,90,190,0.45)_2%,rgba(0,100,200,0)_12%,rgba(0,0,0,0)_72%,rgba(10,40,120,0.18)_100%)]" />
      <div className="absolute inset-0 bg-[radial-gradient(420px_420px_at_1680px_420px,rgba(0,110,240,0.55),rgba(0,110,240,0))]" />
      <div className="absolute left-[1194px] top-[433px] w-[40px] h-[125px] bg-[#1a8cf0] border-l-2 border-t border-[#5ccaf2]" />
      <div className="absolute left-[1194px] top-[567px] w-[40px] h-[125px] bg-[#2a96f2] border-l-2 border-b border-[#5ccaf2]" />

      <Desktop />
      <MainWindow />
      <UnknownDialog />
      <PortDialog name="打印机端口 (LPT1)" className="left-[703px] top-[3px]" />
      <FileDialog name="打印机端口 (LPT1)" files={["X:\\windows\\system32\\DRIVERS\\parport.sys"]} className="left-[1209px] top-[3px]" />
      <PortDialog name="通信端口 (COM1)" className="left-[714px] top-[493px]" />
      <FileDialog
        name="通信端口 (COM1)"
        files={["X:\\windows\\system32\\DRIVERS\\serenum.sys", "X:\\windows\\system32\\DRIVERS\\serial.sys"]}
        className="left-[1220px] top-[528px]"
      />

      {/* mouse pointer */}
      <svg width="13" height="20" viewBox="0 0 13 20" className="absolute left-[603px] top-[540px]">
        <path d="M.5.5v16l4-3.500 2.500 6 2.500-1-2.500-6h5.500z" fill="#fff" stroke="#111" strokeWidth="1" />
      </svg>

      <Taskbar />
    </div>
  );
}
